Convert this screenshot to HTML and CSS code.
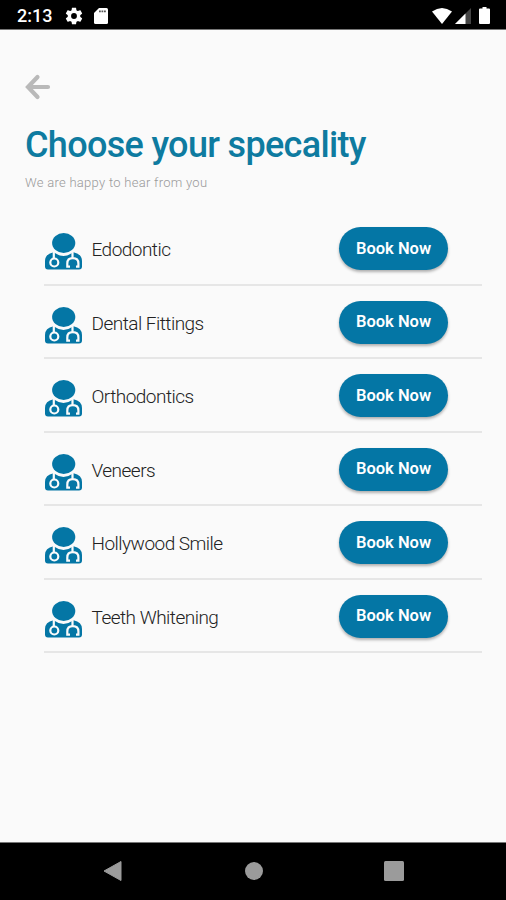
FILE: index.html
```html
<!DOCTYPE html>
<html lang="en">
<head>
    <meta charset="UTF-8">
    <meta name="viewport" content="width=device-width, initial-scale=1.0">
    <title>Choose your specality</title>
    <link rel="stylesheet" href="styles.css">
</head>
<body>

<svg class="sprite" width="0" height="0">
    <symbol id="doctor" viewBox="0 0 37 37">
        <ellipse cx="18.7" cy="10" rx="11.6" ry="10" fill="#0476a5"/>
        <path d="M8.500 19.300Q18.500 26.500 28.500 19.300Q37 21 37 28V33.500Q37 36.500 34 36.500H3Q0 36.500 0 33.500V28Q0 21 8.500 19.300Z" fill="#0476a5"/>
        <g fill="none" stroke="#fafafa" stroke-width="2.200">
            <path d="M8.800 19V25.500"/>
            <circle cx="9.300" cy="29.500" r="4"/>
            <path d="M27.500 19V25M25 33.600H22.300V30.500Q22.300 25.200 27.800 25.200Q33.400 25.200 33.400 30.500V33.600H31"/>
        </g>
    </symbol>
</svg>

<div class="status-bar">
    <span class="time">2:13</span>
    <svg class="gear" width="20" height="20" viewBox="0 0 24 24"><path fill="#fff" fill-rule="evenodd" d="M19.400 13c.1-.3.1-.7.1-1s0-.7-.1-1l2.200-1.700c.2-.1.2-.4.1-.6l-2-3.500c-.1-.2-.4-.3-.6-.2l-2.500 1c-.5-.4-1.100-.7-1.700-1l-.4-2.600c0-.3-.2-.4-.5-.4h-4c-.2 0-.5.2-.5.4l-.4 2.600c-.6.3-1.200.6-1.700 1l-2.500-1c-.2-.1-.5 0-.6.2l-2 3.500c-.1.2-.1.5.1.6L4.600 11c-.1.3-.1.7-.1 1s0 .7.1 1l-2.200 1.700c-.2.1-.2.4-.1.6l2 3.500c.1.2.4.3.6.2l2.500-1c.5.4 1.100.7 1.700 1l.4 2.600c0 .2.3.4.5.4h4c.3 0 .5-.2.5-.4l.4-2.600c.6-.3 1.200-.6 1.700-1l2.500 1c.2.1.5 0 .6-.2l2-3.500c.1-.2.1-.5-.1-.6zM12 15.500a3.500 3.500 0 1 1 0-7 3.500 3.500 0 0 1 0 7z"/></svg>
    <svg class="sd-card" width="14" height="16" viewBox="0 0 14 16"><path fill="#fff" d="M5 0H12.500Q14 0 14 1.500V14.500Q14 16 12.500 16H1.500Q0 16 0 14.500V5Z"/><path stroke="#555" stroke-width="1.800" stroke-dasharray="1.800 .7" d="M5 3.300h7.500"/></svg>
    <div class="signals">
        <svg width="20" height="16" viewBox="0 0 20 16"><path fill="#fff" d="M0 3.500Q10-3.500 20 3.500L10 16Z"/></svg>
        <svg width="16" height="16" viewBox="0 0 16 16"><path fill="#444" d="M16 0V16H0Z"/><path fill="#fff" d="M10.500 5.500V16H0Z"/></svg>
        <svg class="battery" width="11" height="17" viewBox="0 0 11 17"><path fill="#fff" d="M3.500 0h4v1.500H10Q11 1.500 11 2.500V16Q11 17 10 17H1Q0 17 0 16V2.500Q0 1.500 1 1.500H3.500Z"/></svg>
    </div>
</div>

<main class="screen">
    <a class="back" href="#" aria-label="Back">
        <svg width="26" height="26" viewBox="0 0 26 26" fill="none" stroke="#b9b9b9" stroke-width="4.200"><path stroke-linecap="round" d="M23 13H4M12.500 3L3 13L12.500 23"/></svg>
    </a>
    <h1>Choose your specality</h1>
    <p class="subtitle">We are happy to hear from you</p>

    <ul class="specialities">
        <li>
            <svg class="icon"><use href="#doctor"/></svg>
            <span class="name">Edodontic</span>
            <button>Book Now</button>
        </li>
        <li>
            <svg class="icon"><use href="#doctor"/></svg>
            <span class="name">Dental Fittings</span>
            <button>Book Now</button>
        </li>
        <li>
            <svg class="icon"><use href="#doctor"/></svg>
            <span class="name">Orthodontics</span>
            <button>Book Now</button>
        </li>
        <li>
            <svg class="icon"><use href="#doctor"/></svg>
            <span class="name">Veneers</span>
            <button>Book Now</button>
        </li>
        <li>
            <svg class="icon"><use href="#doctor"/></svg>
            <span class="name">Hollywood Smile</span>
            <button>Book Now</button>
        </li>
        <li>
            <svg class="icon"><use href="#doctor"/></svg>
            <span class="name">Teeth Whitening</span>
            <button>Book Now</button>
        </li>
    </ul>
</main>

<nav class="nav-bar">
    <svg width="20" height="22" viewBox="0 0 20 22"><path fill="#9b9b9b" d="M1 11L18 1.500V20.500Z" stroke="#9b9b9b" stroke-linejoin="round"/></svg>
    <svg width="18" height="18" viewBox="0 0 18 18"><circle cx="9" cy="9" r="9" fill="#9b9b9b"/></svg>
    <svg width="20" height="20" viewBox="0 0 20 20"><rect width="20" height="20" rx="1.500" fill="#9b9b9b"/></svg>
</nav>

</body>
</html>
```

FILE: styles.css
```css
* {
    box-sizing: border-box;
}

body {
    margin: 0;
    height: 900px;
    display: flex;
    flex-direction: column;
    overflow: hidden;
    font-family: Roboto, "Liberation Sans", sans-serif;
    background-color: #fafafa;
}

.sprite {
    position: absolute;
}

.status-bar {
    display: flex;
    align-items: center;
    height: 30px;
    padding: 2px 16px 0 17px;
    background-color: #000;
    border-bottom: 1px solid #777;
    color: #fff;
}

.time {
    width: 47px;
    font-size: 18px;
    font-weight: 500;
}

.sd-card {
    margin-left: 10px;
}

.signals {
    display: flex;
    align-items: center;
    gap: 3px;
    margin-left: auto;
}

.battery {
    margin-left: 5px;
}

.screen {
    flex: 1;
    padding: 44px 24px 0 25px;
}

.back {
    display: block;
    height: 26px;
}

h1 {
    margin: 23px 0 0;
    font-size: 36px;
    font-weight: 500;
    line-height: 44px;
    letter-spacing: -0.67px;
    color: #0e7ba0;
    white-space: nowrap;
}

.subtitle {
    margin: 7px 0 0;
    font-size: 13px;
    font-weight: 300;
    line-height: 18px;
    letter-spacing: 0.28px;
    color: #999;
}

.specialities {
    margin: 20px 0 0 19px;
    padding: 0;
    list-style: none;
}

.specialities li {
    display: flex;
    align-items: center;
    height: 73.5px;
    border-bottom: 2px solid #e6e6e6;
}

.icon {
    width: 37px;
    height: 37px;
    margin: 8px 0 0 0.5px;
}

.name {
    margin: 4px 0 0 10px;
    font-size: 19px;
    font-weight: 300;
    letter-spacing: -0.52px;
    color: #222;
}

button {
    width: 109px;
    height: 43px;
    margin: 2px 34px 0 auto;
    padding: 0 0 1px;
    border: none;
    border-radius: 22px;
    background-color: #0476a5;
    box-shadow: 0 2px 3px rgba(0, 0, 0, 0.3);
    color: #fff;
    font-family: inherit;
    font-size: 16.5px;
    font-weight: 600;
}

.nav-bar {
    display: flex;
    align-items: center;
    justify-content: space-between;
    height: 58px;
    padding: 0 102px 2px 103px;
    background-color: #000;
    border-top: 1px solid #777;
}
```
